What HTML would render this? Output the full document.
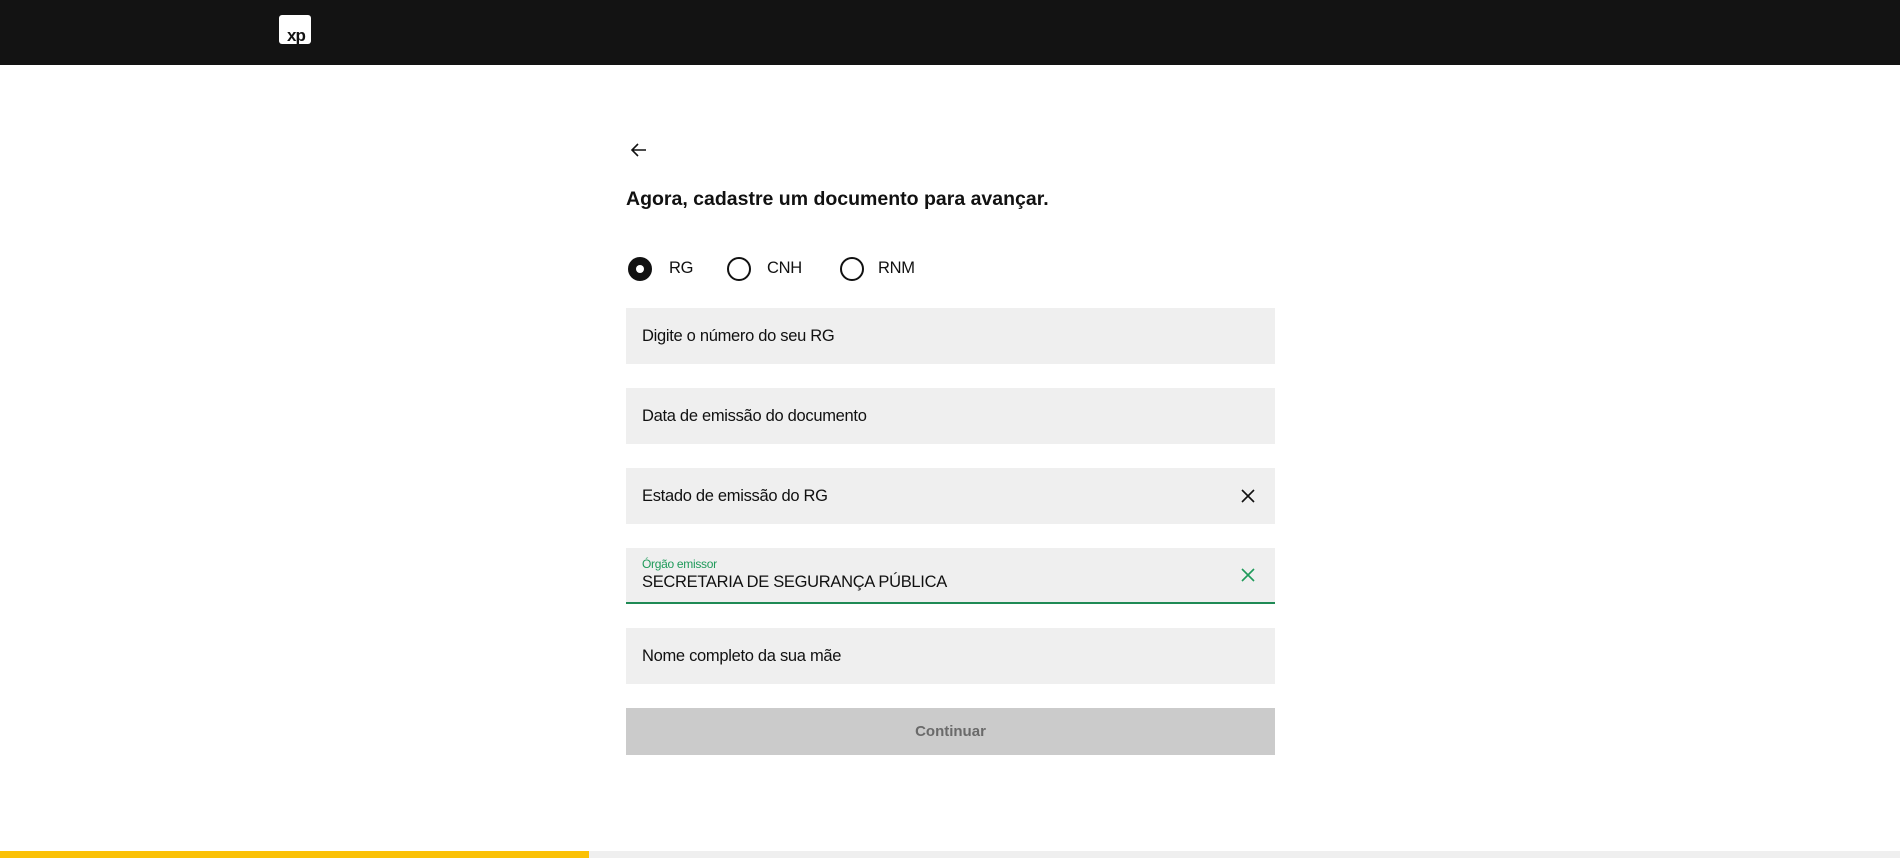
<!DOCTYPE html>
<html><head><meta charset="utf-8"><style>
*{margin:0;padding:0;box-sizing:border-box}
body{width:1900px;height:858px;background:#fff;font-family:"Liberation Sans",sans-serif;color:#111;position:relative;overflow:hidden}
.hdr{position:absolute;left:0;top:0;width:1900px;height:65px;background:#131313}
.logo{position:absolute;left:279px;top:15px;width:32px;height:29px;background:#fff;border-radius:3px;overflow:hidden}
.logo span{position:absolute;left:8px;top:11px;font:bold 17px "Liberation Sans",sans-serif;color:#131313;letter-spacing:-1px}
.abs{position:absolute}
.field{position:absolute;left:626px;width:649px;height:56px;background:#efefef;font-size:16.5px;letter-spacing:-0.3px;padding-left:16px;line-height:56px;color:#111}
.radio{position:absolute;top:257px;width:24px;height:24px;border:2px solid #111;border-radius:50%}
.rl{position:absolute;top:259px;font-size:16.5px;letter-spacing:-0.3px}
.x{position:absolute;left:1240px;width:16px;height:16px}
</style></head><body>
<div class="hdr"><div class="logo"><span>xp</span></div></div>
<svg class="abs" style="left:629px;top:140px" width="20" height="20" viewBox="0 0 20 20"><path d="M17 10H3M9 4l-6 6 6 6" fill="none" stroke="#111" stroke-width="1.6"/></svg>
<div class="abs" style="left:626px;top:188px;font-size:19.5px;font-weight:bold">Agora, cadastre um documento para avançar.</div>
<div class="radio" style="left:628px;background:#111"><div style="position:absolute;left:6px;top:6px;width:8px;height:8px;border-radius:50%;background:#fff"></div></div>
<div class="rl" style="left:669px">RG</div>
<div class="radio" style="left:727px"></div>
<div class="rl" style="left:767px">CNH</div>
<div class="radio" style="left:840px"></div>
<div class="rl" style="left:878px">RNM</div>
<div class="field" style="top:308px">Digite o número do seu RG</div>
<div class="field" style="top:388px">Data de emissão do documento</div>
<div class="field" style="top:468px">Estado de emissão do RG</div>
<svg class="x" style="top:488px" viewBox="0 0 16 16"><path d="M2 2L14 14M14 2L2 14" stroke="#111" stroke-width="1.6"/></svg>
<div class="field" style="top:548px;border-bottom:2px solid #1f8a55;line-height:normal">
<div style="position:absolute;left:16px;top:9px;font-size:12px;color:#1f9a5a">Órgão emissor</div>
<div style="position:absolute;left:16px;top:25px;font-size:16.5px">SECRETARIA DE SEGURANÇA PÚBLICA</div></div>
<svg class="x" style="top:567px" viewBox="0 0 16 16"><path d="M2 2L14 14M14 2L2 14" stroke="#1f9a5a" stroke-width="1.6"/></svg>
<div class="field" style="top:628px">Nome completo da sua mãe</div>
<div class="abs" style="left:626px;top:708px;width:649px;height:47px;background:#cbcbcb;text-align:center;line-height:47px;font-size:15px;font-weight:bold;color:#6a6a6a">Continuar</div>
<div class="abs" style="left:0;top:851px;width:1900px;height:7px;background:#efefef"></div>
<div class="abs" style="left:0;top:851px;width:589px;height:7px;background:#fbc105"></div>
</body></html>
